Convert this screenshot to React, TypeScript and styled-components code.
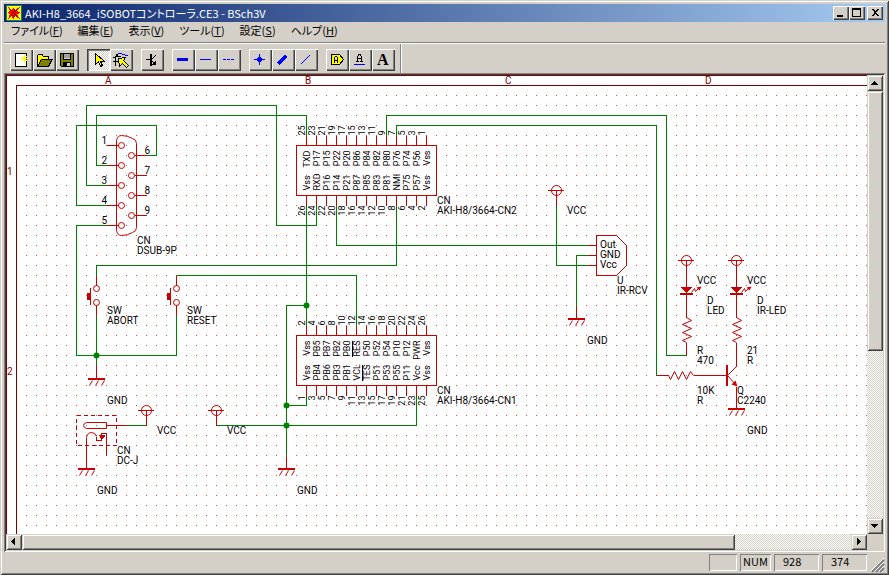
import React from 'react';
import styled, { createGlobalStyle, css } from 'styled-components';

const face = '#d4d0c8';
const uiFont = `'Noto Sans CJK JP', 'Liberation Sans', sans-serif`;

const Global = createGlobalStyle`
  * { box-sizing: border-box; }
  body { margin: 0; background: ${face}; font: 11px/16px ${uiFont}; font-feature-settings: 'palt'; color: #000; }
  button { margin: 0; padding: 0; border: 0; border-radius: 0; font: inherit; font-feature-settings: inherit; color: inherit; }
  svg { display: block; }
`;

const raised = css`
  background: ${face};
  box-shadow: inset 1px 1px #fff, inset -1px -1px #404040, inset -2px -2px #808080;
`;
const raisedSoft = css`
  background: ${face};
  box-shadow: inset 1px 1px ${face}, inset -1px -1px #404040, inset 2px 2px #fff, inset -2px -2px #808080;
`;
const dither = css`
  background: repeating-conic-gradient(#fff 0 25%, ${face} 0 50%) 0 0 / 2px 2px;
`;

const Window = styled.div`
  display: flex;
  flex-direction: column;
  height: 100vh;
  padding: 4px;
  background: ${face};
  box-shadow: inset 1px 1px ${face}, inset -1px -1px #404040, inset 2px 2px #fff, inset -2px -2px #808080;
`;

const TitleBar = styled.header`
  display: flex;
  align-items: center;
  flex: none;
  height: 18px;
  padding: 0 2px;
  background: linear-gradient(to right, #0a246a, #a6caf0);
`;
const Title = styled.h1`
  flex: 1;
  margin: 0 0 0 3px;
  font-size: 11px;
  line-height: 18px;
  font-weight: 400;
  color: #fff;
  white-space: nowrap;
`;
const CaptionButton = styled.button<{ $apart?: boolean }>`
  width: 16px;
  height: 14px;
  margin-left: ${p => (p.$apart ? '2px' : '0')};
  ${raised}
`;

const MenuBar = styled.nav`
  display: flex;
  flex: none;
  gap: 15px;
  height: 22px;
  padding: 0 7px;
  border-bottom: 1px solid #fff;
  box-shadow: inset 0 -1px #808080;
`;
const MenuItem = styled.button`
  background: none;
  line-height: 16px;
  height: 16px;
  white-space: nowrap;
`;

const Toolbar = styled.div`
  display: flex;
  flex: none;
  gap: 8px;
  height: 29px;
  padding: 5px 6px 2px;
  align-self: flex-start;
  border-right: 1px solid #fff;
  box-shadow: inset -1px 0 #808080;
`;
const ToolGroup = styled.div`
  display: flex;
`;
const ToolButton = styled.button<{ $pressed?: boolean }>`
  width: 23px;
  height: 22px;
  ${raised}
  ${p => p.$pressed && css`
    ${dither}
    box-shadow: inset 1px 1px #404040, inset 2px 2px #808080, inset -1px -1px #fff;
  `}
`;

const View = styled.main`
  display: grid;
  grid-template-columns: minmax(0, 1fr) 16px;
  grid-template-rows: minmax(0, 1fr) 16px;
  flex: 1;
  min-height: 0;
  padding: 2px;
  box-shadow: inset 1px 1px #808080, inset -1px -1px #fff, inset 2px 2px #404040, inset -2px -2px ${face};
`;
const Sheet = styled.div`
  overflow: hidden;
  background: #fff;
`;
const Scrollbar = styled.div<{ $vertical?: boolean }>`
  display: flex;
  flex-direction: ${p => (p.$vertical ? 'column' : 'row')};
  min-width: 0;
  min-height: 0;
`;
const ArrowButton = styled.button`
  flex: none;
  width: 16px;
  height: 16px;
  ${raisedSoft}
`;
const Track = styled.div<{ $vertical?: boolean }>`
  display: flex;
  flex-direction: ${p => (p.$vertical ? 'column' : 'row')};
  flex: 1;
  ${dither}
`;
const Thumb = styled.div<{ $share: string }>`
  flex: 0 0 ${p => p.$share};
  ${raisedSoft}
`;

const StatusBar = styled.footer`
  display: flex;
  flex: none;
  justify-content: flex-end;
  gap: 3px;
  height: 19px;
  padding-top: 2px;
`;
const Pane = styled.div<{ $w: number; $pad?: number }>`
  width: ${p => p.$w}px;
  height: 17px;
  padding-left: ${p => p.$pad ?? 3}px;
  line-height: 15px;
  font-size: 11px;
  box-shadow: inset 1px 1px #808080, inset -1px -1px #fff;
`;
const Grip = styled.svg`
  width: 15px;
  height: 19px;
`;

const Drawing = styled.svg`
  width: 100%;
  height: 100%;
  shape-rendering: crispEdges;
  text { font: 10px Roboto, sans-serif; font-feature-settings: normal; fill: #000; }
  .pin { font-size: 9px; }
  .mark { fill: #800000; }
  .wire { stroke: #008000; fill: none; }
  .node { fill: #008000; }
  .part { stroke: #c80000; fill: none; }
  .fill { stroke: none; fill: #c80000; }
  .smooth { shape-rendering: auto; }
`;

const wires = [
  'M106 185H86V105H276V225H316V205',
  'M106 165H96V115H306V135',
  'M106 205H76V125H156V155H146',
  'M106 225H76V355H176V315',
  'M96 275V265H396V205',
  'M176 275H356V325',
  'M96 315V365',
  'M386 135V115H666V355H686',
  'M396 135V125H656V375',
  'M306 205V325',
  'M306 305H286V456',
  'M336 205V245H587',
  'M306 395V405H286',
  'M416 395V425H216',
  'M126 425H146',
  'M556 205V265H587',
  'M587 255H576V306',
];
const nodes = [[96, 355], [306, 305], [286, 405], [286, 425]];
const supplies = [[146, 410], [216, 410], [556, 190], [686, 260], [736, 260]];
const grounds = [[96, 378, 13], [86, 468, 13], [286, 468, 13], [576, 318, 13], [736, 408, 13]];

const labels: [number, number, string][] = [
  [138, 244, 'CN'], [138, 254, 'DSUB-9P'],
  [108, 314, 'SW'], [108, 324, 'ABORT'], [188, 314, 'SW'], [188, 324, 'RESET'],
  [108, 404, 'GND'], [158, 434, 'VCC'], [228, 434, 'VCC'],
  [118, 454, 'CN'], [118, 464, 'DC-J'], [98, 494, 'GND'], [298, 494, 'GND'],
  [438, 204, 'CN'], [438, 214, 'AKI-H8/3664-CN2'],
  [438, 394, 'CN'], [438, 404, 'AKI-H8/3664-CN1'],
  [568, 214, 'VCC'], [601, 248, 'Out'], [601, 258, 'GND'], [601, 268, 'Vcc'],
  [618, 284, 'U'], [618, 294, 'IR-RCV'], [588, 344, 'GND'],
  [698, 284, 'VCC'], [748, 284, 'VCC'],
  [708, 304, 'D'], [708, 314, 'LED'], [758, 304, 'D'], [758, 314, 'IR-LED'],
  [698, 354, 'R'], [698, 364, '470'], [748, 354, '21'], [748, 364, 'R'],
  [698, 394, '10K'], [698, 404, 'R'], [738, 394, 'Q'], [738, 404, 'C2240'], [748, 434, 'GND'],
];

function Upright({ x, y, end, children }: { x: number; y: number; end?: boolean; children: React.ReactNode }) {
  return (
    <text className="pin" transform={`translate(${x} ${y}) rotate(-90)`} textAnchor={end ? 'end' : 'start'}>
      {children}
    </text>
  );
}

function Header({ y, top, bottom, names }: { y: number; top: (i: number) => number; bottom: (i: number) => number; names: [string[], string[]] }) {
  return (
    <g>
      <rect className="part" x={296} y={y} width={140} height={50} />
      {names[0].map((name, i) => {
        const x = 306 + i * 10;
        return (
          <g key={i}>
            <path className="part" d={`M${x} ${y - 10}V${y}M${x} ${y + 50}v10`} />
            <Upright x={x - 2} y={y - 10}>{top(i)}</Upright>
            <Upright x={x - 2} y={y + 60} end>{bottom(i)}</Upright>
            <Upright x={x + 3} y={y + 5} end>{name}</Upright>
            <Upright x={x + 3} y={y + 45}>{names[1][i]}</Upright>
          </g>
        );
      })}
    </g>
  );
}

function PushSwitch({ x, y }: { x: number; y: number }) {
  return (
    <g transform={`translate(${x} ${y})`}>
      <path className="part" d="M0 0V10M0 30V40M-6 12V29" />
      <circle className="part smooth" cx={0} cy={13} r={3} />
      <circle className="part smooth" cx={0} cy={27} r={3} />
      <rect className="fill" x={-10} y={17} width={4} height={7} />
    </g>
  );
}

function Led({ x }: { x: number }) {
  return (
    <g transform={`translate(${x} 275)`}>
      <path className="part" d="M0 0V42" />
      <path className="fill" d="M-7 11H6L0 17H-1Z" />
      <rect className="fill" x={-7} y={17} width={13} height={2} />
      <path className="part smooth" d="M5 17L8 13L9 16L13 12" />
      <path className="fill smooth" d="M15 11L10 12L13 15Z" />
      <path className="part smooth" d="M0 42L5 45L-4 49L5 53L-4 57L5 61L-4 65L0 67" />
    </g>
  );
}

function Schematic() {
  return (
    <Drawing role="img" aria-label="回路図">
      <defs>
        <pattern id="grid" x={20} y={20} width={10} height={10} patternUnits="userSpaceOnUse">
          <rect width={1} height={1} fill="#f04848" />
        </pattern>
      </defs>
      <rect x={20} y={20} width="100%" height="100%" fill="url(#grid)" />
      <g transform="translate(-5.5 -74.5)">
        <path d="M6 1000V75H2000M16 1000V85H2000" stroke="#800000" fill="none" />

        {wires.map(d => <path key={d} className="wire" d={d} />)}
        {nodes.map(([x, y]) => <circle key={`${x},${y}`} className="node smooth" cx={x} cy={y} r={3} />)}

        <path className="part smooth" d="M116 140Q117 135 121 135Q127 135 132 138Q136 139 136 143V227Q136 231 132 232Q127 235 121 235Q117 235 116 230Z" />
        {[0, 1, 2, 3, 4].map(i => (
          <g key={i}>
            <path className="part" d={`M106 ${145 + i * 20}H118`} />
            <circle className="part smooth" cx={121} cy={145 + i * 20} r={3} />
            <text x={101} y={143 + i * 20}>{i + 1}</text>
          </g>
        ))}
        {[0, 1, 2, 3].map(i => (
          <g key={i}>
            <path className="part" d={`M134 ${155 + i * 20}H146`} />
            <circle className="part smooth" cx={131} cy={155 + i * 20} r={3} />
            <text x={144} y={153 + i * 20}>{i + 6}</text>
          </g>
        ))}

        <Header
          y={145}
          top={i => 25 - i * 2}
          bottom={i => 26 - i * 2}
          names={[
            ['TXD', 'P17', 'P15', 'P22', 'P20', 'P86', 'P84', 'P82', 'P80', 'P76', 'P74', 'P56', 'Vss'],
            ['Vss', 'RXD', 'P16', 'P14', 'P21', 'P87', 'P85', 'P83', 'P81', 'NMI', 'P75', 'P57', 'Vss'],
          ]}
        />
        <Header
          y={335}
          top={i => 2 + i * 2}
          bottom={i => 1 + i * 2}
          names={[
            ['Vss', 'PB5', 'PB7', 'PB2', 'PB0', 'RES', 'P50', 'P52', 'P54', 'P10', 'P12', 'PWR', 'Vss'],
            ['Vss', 'PB4', 'PB6', 'PB3', 'PB1', 'VCL', 'TES', 'P51', 'P53', 'P55', 'P11', 'Vcc', 'Vss'],
          ]}
        />
        <path d="M352 340V356M362 364V380" stroke="#000" />

        {supplies.map(([x, y]) => (
          <g key={`${x},${y}`} transform={`translate(${x} ${y})`}>
            <circle className="part smooth" r={5} />
            <path className="part" d="M-8.500 0H7.500M0 0V15" />
          </g>
        ))}
        {grounds.map(([x, y, lead]) => (
          <g key={`${x},${y}`} transform={`translate(${x} ${y})`}>
            <path className="part" d={`M0 ${-lead}V0M-8.500 0H8.500M-8.500 1H8.500`} />
            <path className="part smooth" d="M-4 2L-7 7M2 2L-1 7M8 2L5 7" />
          </g>
        ))}

        <PushSwitch x={96} y={275} />
        <PushSwitch x={176} y={275} />

        <path className="part" d="M596 235H616L626 245V265L616 275H596ZM587 245H596M587 255H596M587 265H596" />

        <Led x={686} />
        <Led x={736} />
        <path className="part" d="M686 342V355M736 342V366M656 375H668M693 375H726M736 386V408" />
        <path className="part smooth" d="M668 375L670 379L674 371L678 379L682 371L686 379L690 371L693 375M736 366L727 375L736 385" />
        <rect className="fill" x={725} y={364} width={2} height={21} />
        <path className="fill smooth" d="M737 386L731 384L735 380Z" />

        <rect className="part" x={76} y={415} width={40} height={30} strokeDasharray="4 3" />
        <path className="part smooth" d="M106 422H86Q83 423 83 425Q83 427 86 428H106Z" />
        <path className="part" d="M106 425H126M86 456V437M96 436V440H101V433H106V455" />
        <path className="part smooth" d="M86 437Q87 432 91 432Q95 432 96 436" />
        <path className="fill" d="M98 434H104V436L101 439Z" />
      </g>
      <g transform="translate(-7 -75)">
        <text className="mark" x={106} y={84}>A</text>
        <text className="mark" x={306} y={84}>B</text>
        <text className="mark" x={506} y={84}>C</text>
        <text className="mark" x={706} y={84}>D</text>
        <text className="mark" x={8} y={175}>1</text>
        <text className="mark" x={8} y={375}>2</text>
        {labels.map(([x, y, s]) => <text key={`${x},${y}`} x={x} y={y}>{s}</text>)}
      </g>
    </Drawing>
  );
}

function Icon({ children }: { children: React.ReactNode }) {
  return <svg width={23} height={22} shapeRendering="crispEdges" aria-hidden="true">{children}</svg>;
}

type Tool = { label: string; pressed?: boolean; art: React.ReactNode };
const arrow = 'M0 0V11L3 8L5 13L7 12L5 8H9Z';

const toolGroups: Tool[][] = [
  [
    {
      label: '新規作成',
      art: (
        <>
          <path d="M5.500 4.500H16.500V17.500H5.500Z" fill="#fff" stroke="#000" />
          <path d="M14.500 5V14M10 9.500H19M12 7L17 12M17 7L12 12" stroke="#ff0" />
        </>
      ),
    },
    {
      label: '開く',
      art: (
        <>
          <path d="M4.500 17V6.500L6 5.500H9L10.500 7.500H15.500V10.500" fill="#ff0" stroke="#000" />
          <path d="M4.500 17.500L8.500 10.500H19L15.500 17.500Z" fill="#808000" stroke="#000" />
        </>
      ),
    },
    {
      label: '保存',
      art: (
        <>
          <path d="M4.500 4.500H17.500V17.500H5.500L4.500 16.500Z" fill="#808000" stroke="#000" />
          <path d="M7.500 4.500H14.500V10.500H7.500ZM7.500 13.500H14.500V17.500H7.500Z" fill={face} stroke="#000" />
          <path d="M8 14H11V17H8Z" />
          <path d="M8 5H14V9H8Z" fill="#a0a0a0" />
        </>
      ),
    },
  ],
  [
    { label: '選択', pressed: true, art: <path transform="translate(8.500 4.500)" d={arrow} fill="#ff0" stroke="#000" /> },
    {
      label: 'ドラッグ',
      art: (
        <>
          <path d="M6 5H8V7H11V8H6V17H5V9H3V8H5V7H6ZM3 12H8V13H3Z" />
          <path d="M8 4H12V5H15V6H18V7H15V6H12V5H8Z" fill="#00f" />
          <path d="M8.500 9.500L15.500 8.500L13.500 11.500L18.500 16.500L16.500 18.500L12.500 14.500L9.500 17.500Z" fill="#ff0" stroke="#000" />
        </>
      ),
    },
  ],
  [{
    label: '部品',
    art: (
      <>
        <path d="M5 10.500H10M9.500 5V17M15 6L10 11L13 14" stroke="#000" strokeWidth="1" fill="none" />
        <path d="M9 5H11V17H9ZM15 11V16H10Z" />
      </>
    ),
  }],
  [
    { label: 'バス', art: <path d="M5 9H16V12H5Z" fill="#00f" /> },
    { label: 'ワイヤ', art: <path d="M5 10H16V11H5Z" fill="#00f" /> },
    { label: '破線', art: <path d="M5 10h3v1h-3zM9 10h3v1h-3zM13 10h3v1h-3z" fill="#00f" /> },
  ],
  [
    { label: 'ジャンクション', art: <path d="M5 10H8V9H9V8H10V5H11V8H12V9H13V10H16V11H13V12H12V13H11V16H10V13H9V12H8V11H5Z" fill="#00f" /> },
    { label: 'バスエントリ', art: <path d="M6 15L14 7" stroke="#00f" strokeWidth="3" /> },
    { label: 'エントリ', art: <path d="M6 15L15 6" stroke="#00f" /> },
  ],
  [
    {
      label: 'タグ',
      art: (
        <>
          <path d="M5.500 5.500H13.500L17.500 10.500L13.500 15.500H5.500Z" fill="#ff0" stroke="#000" />
          <path d="M8.500 14V9L9.500 7.500H10.500L11.500 9V14M9 11.500H11" fill="none" stroke="#000" />
        </>
      ),
    },
    {
      label: 'ラベル',
      art: (
        <>
          <path d="M8.500 13V8L10 5.500H11L12.500 8V13M9 9.500H12M7 12.500H10M11 12.500H14" fill="none" stroke="#000" />
          <path d="M5 15H16V16H5Z" fill="#00f" />
        </>
      ),
    },
    { label: 'コメント', art: <text x={5} y={16} fontFamily="Liberation Serif, serif" fontSize={16} fontWeight={700}>A</text> },
  ],
];

const menus: [string, string][] = [
  ['ファイル', 'F'], ['編集', 'E'], ['表示', 'V'], ['ツール', 'T'], ['設定', 'S'], ['ヘルプ', 'H'],
];

function Arrow({ d }: { d: string }) {
  return <svg width={16} height={16} shapeRendering="crispEdges" aria-hidden="true"><path d={d} /></svg>;
}

export default function App() {
  return (
    <>
      <Global />
      <Window>
        <TitleBar>
          <svg width={16} height={16} shapeRendering="crispEdges" aria-hidden="true">
            <rect width={16} height={16} fill="#008080" />
            <rect x={1} y={1} width={14} height={14} fill="#ff0" />
            <path d="M2 2L6 5L8 2L9 5L14 2L11 6L15 8L11 9L14 14L9 11L7 15L6 11L2 14L4 9L1 8L4 6Z" fill="#f00" />
            <path d="M4 4L12 12M12 4L4 12M8 4V12" stroke="#a00000" />
          </svg>
          <Title>AKI-H8_3664_iSOBOTコントローラ.CE3 - BSch3V</Title>
          <CaptionButton aria-label="最小化"><svg width={16} height={14}><path d="M4 9H10V11H4Z" /></svg></CaptionButton>
          <CaptionButton aria-label="最大化">
            <svg width={16} height={14} shapeRendering="crispEdges"><path d="M3 2H12V11H3ZM4 4V10H11V4Z" fillRule="evenodd" /></svg>
          </CaptionButton>
          <CaptionButton aria-label="閉じる" $apart>
            <svg width={16} height={14} shapeRendering="crispEdges"><path d="M4 3H6L8 5L10 3H12L9 6V7L12 10H10L8 8L6 10H4L7 7V6Z" /></svg>
          </CaptionButton>
        </TitleBar>
        <MenuBar>
          {menus.map(([name, key]) => <MenuItem key={key}>{name}(<u>{key}</u>)</MenuItem>)}
        </MenuBar>
        <Toolbar role="toolbar">
          {toolGroups.map((group, i) => (
            <ToolGroup key={i}>
              {group.map(t => (
                <ToolButton key={t.label} aria-label={t.label} aria-pressed={t.pressed} $pressed={t.pressed}>
                  <Icon>{t.art}</Icon>
                </ToolButton>
              ))}
            </ToolGroup>
          ))}
        </Toolbar>
        <View>
          <Sheet><Schematic /></Sheet>
          <Scrollbar $vertical>
            <ArrowButton aria-label="上へ"><Arrow d="M7 6H8V7H9V8H10V9H11V10H4V9H5V8H6V7H7Z" /></ArrowButton>
            <Track $vertical><Thumb $share="61%" /></Track>
            <ArrowButton aria-label="下へ"><Arrow d="M4 6H11V7H10V8H9V9H8V10H7V9H6V8H5V7H4Z" /></ArrowButton>
          </Scrollbar>
          <Scrollbar>
            <ArrowButton aria-label="左へ"><Arrow d="M5 7H6V6H7V5H8V4H9V11H8V10H7V9H6V8H5Z" /></ArrowButton>
            <Track><Thumb $share="86%" /></Track>
            <ArrowButton aria-label="右へ"><Arrow d="M6 4H7V5H8V6H9V7H10V8H9V9H8V10H7V11H6Z" /></ArrowButton>
          </Scrollbar>
        </View>
        <StatusBar>
          <Pane $w={28} />
          <Pane $w={31}>NUM</Pane>
          <Pane $w={45} $pad={9}>928</Pane>
          <Pane $w={45} $pad={9}>374</Pane>
          <Grip aria-hidden="true">
            <path d="M2 18L14 6M6 18L14 10M10 18L14 14" stroke="#808080" strokeWidth={2} />
            <path d="M1 17L14 4M5 17L14 8M9 17L14 12" stroke="#fff" />
          </Grip>
        </StatusBar>
      </Window>
    </>
  );
}
